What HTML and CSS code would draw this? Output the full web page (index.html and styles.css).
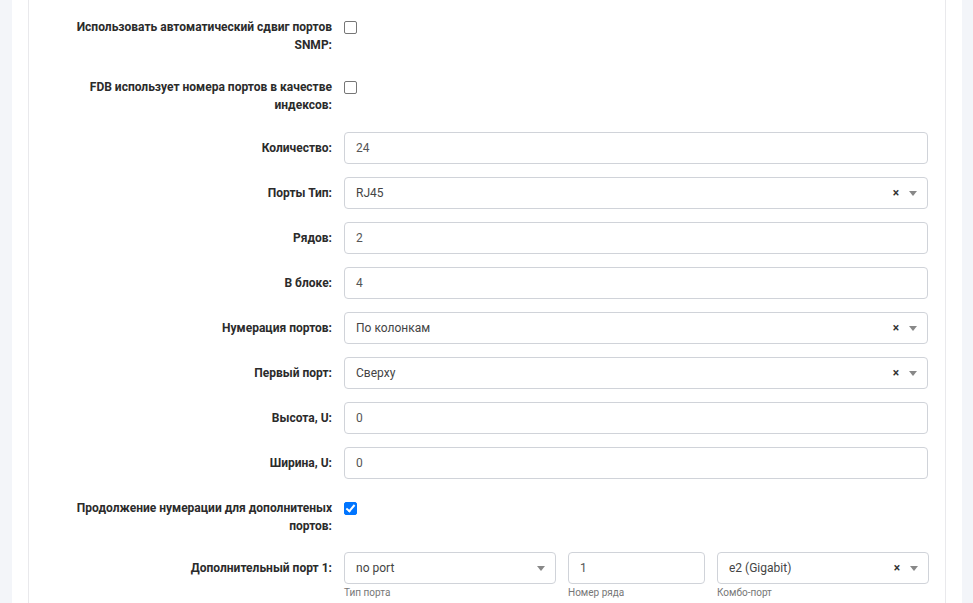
FILE: index.html
```html
<!DOCTYPE html>
<html lang="ru">
<head>
    <meta charset="UTF-8">
    <meta name="viewport" content="width=device-width, initial-scale=1.0">
    <title>Порты</title>
    <link rel="stylesheet" href="styles.css">
</head>
<body>

    <div class="panel">
        <div class="tab-content">

            <!-- Checkboxes -->
            <div class="form-row check-row">
                <label class="control-label">Использовать автоматический сдвиг портов SNMP:</label>
                <div class="control"><span class="checkbox"></span></div>
            </div>
            <div class="form-row check-row">
                <label class="control-label">FDB использует номера портов в качестве индексов:</label>
                <div class="control"><span class="checkbox"></span></div>
            </div>

            <!-- Ports -->
            <div class="form-row">
                <label class="control-label">Количество:</label>
                <div class="control"><div class="form-control">24</div></div>
            </div>
            <div class="form-row">
                <label class="control-label">Порты Тип:</label>
                <div class="control">
                    <div class="select">
                        <span class="select-value">RJ45</span>
                        <span class="select-clear">×</span>
                        <span class="select-arrow"></span>
                    </div>
                </div>
            </div>
            <div class="form-row">
                <label class="control-label">Рядов:</label>
                <div class="control"><div class="form-control">2</div></div>
            </div>
            <div class="form-row">
                <label class="control-label">В блоке:</label>
                <div class="control"><div class="form-control">4</div></div>
            </div>
            <div class="form-row">
                <label class="control-label">Нумерация портов:</label>
                <div class="control">
                    <div class="select">
                        <span class="select-value">По колонкам</span>
                        <span class="select-clear">×</span>
                        <span class="select-arrow"></span>
                    </div>
                </div>
            </div>
            <div class="form-row">
                <label class="control-label">Первый порт:</label>
                <div class="control">
                    <div class="select">
                        <span class="select-value">Сверху</span>
                        <span class="select-clear">×</span>
                        <span class="select-arrow"></span>
                    </div>
                </div>
            </div>
            <div class="form-row">
                <label class="control-label">Высота, U:</label>
                <div class="control"><div class="form-control">0</div></div>
            </div>
            <div class="form-row">
                <label class="control-label">Ширина, U:</label>
                <div class="control"><div class="form-control">0</div></div>
            </div>

            <div class="form-row check-row check-last">
                <label class="control-label">Продолжение нумерации для дополнитеных портов:</label>
                <div class="control"><span class="checkbox checked"></span></div>
            </div>

            <!-- Extra port -->
            <div class="form-row">
                <label class="control-label">Дополнительный порт 1:</label>
                <div class="control extra">
                    <div class="extra-col">
                        <div class="select">
                            <span class="select-value">no port</span>
                            <span class="select-arrow"></span>
                        </div>
                        <div class="help">Тип порта</div>
                    </div>
                    <div class="extra-col">
                        <div class="form-control">1</div>
                        <div class="help">Номер ряда</div>
                    </div>
                    <div class="extra-col">
                        <div class="select">
                            <span class="select-value">e2 (Gigabit)</span>
                            <span class="select-clear">×</span>
                            <span class="select-arrow"></span>
                        </div>
                        <div class="help">Комбо-порт</div>
                    </div>
                </div>
            </div>

        </div>
    </div>

</body>
</html>
```

FILE: styles.css
```css
/* General */
body { margin: 0; padding: 0; background: #f3f5f9; font-family: "Segoe UI", Roboto, "Noto Sans", sans-serif; font-size: 12px; color: #333; }

.panel { margin-left: 12px; width: 950px; height: 603px; background: white; overflow: hidden; }
.tab-content { margin: 0 16px; height: 100%; border-left: 1px solid #e9e9ec; border-right: 1px solid #e9e9ec; padding: 11px 17px 0 0; box-sizing: border-box; }

/* Rows */
.form-row { display: flex; gap: 12px; margin-bottom: 13px; }
.control-label { width: 303px; flex-shrink: 0; text-align: right; font-weight: bold; line-height: 18px; padding: 7px 0 0 12px; box-sizing: border-box; color: #2b2b2b; }
.control { flex: 1; }
.check-row { height: 47px; }
.check-row:nth-child(2) { height: 48px; }
.check-last { height: 47px; }

/* Checkbox */
.checkbox { display: block; width: 11px; height: 11px; margin-top: 10px; border: 1px solid #767676; border-radius: 2px; background: white; position: relative; }
.checkbox.checked { background: #0075ff; border-color: #0075ff; }
.checkbox.checked::after { content: ""; position: absolute; left: 3px; top: 0px; width: 3px; height: 7px; border: solid white; border-width: 0 2px 2px 0; transform: rotate(40deg); }

/* Inputs */
.form-control, .select { height: 32px; border: 1px solid #d0d3d9; border-radius: 4px; box-sizing: border-box; padding: 0 11px; line-height: 30px; color: #555; background: white; }
.select { display: flex; align-items: center; color: #444; padding-right: 10px; }
.select-value { flex: 1; white-space: nowrap; overflow: hidden; }
.select-clear { font-weight: bold; color: #333; font-size: 12px; margin-right: 10px; }
.select-arrow { width: 0; height: 0; border-left: 4px solid transparent; border-right: 4px solid transparent; border-top: 5px solid #888; }

/* Extra port */
.extra { display: flex; gap: 12px; }
.extra-col { width: 212px; }
.extra-col:nth-child(2) { width: 137px; }
.help { font-size: 10px; color: #777; margin-top: 3px; }
```
